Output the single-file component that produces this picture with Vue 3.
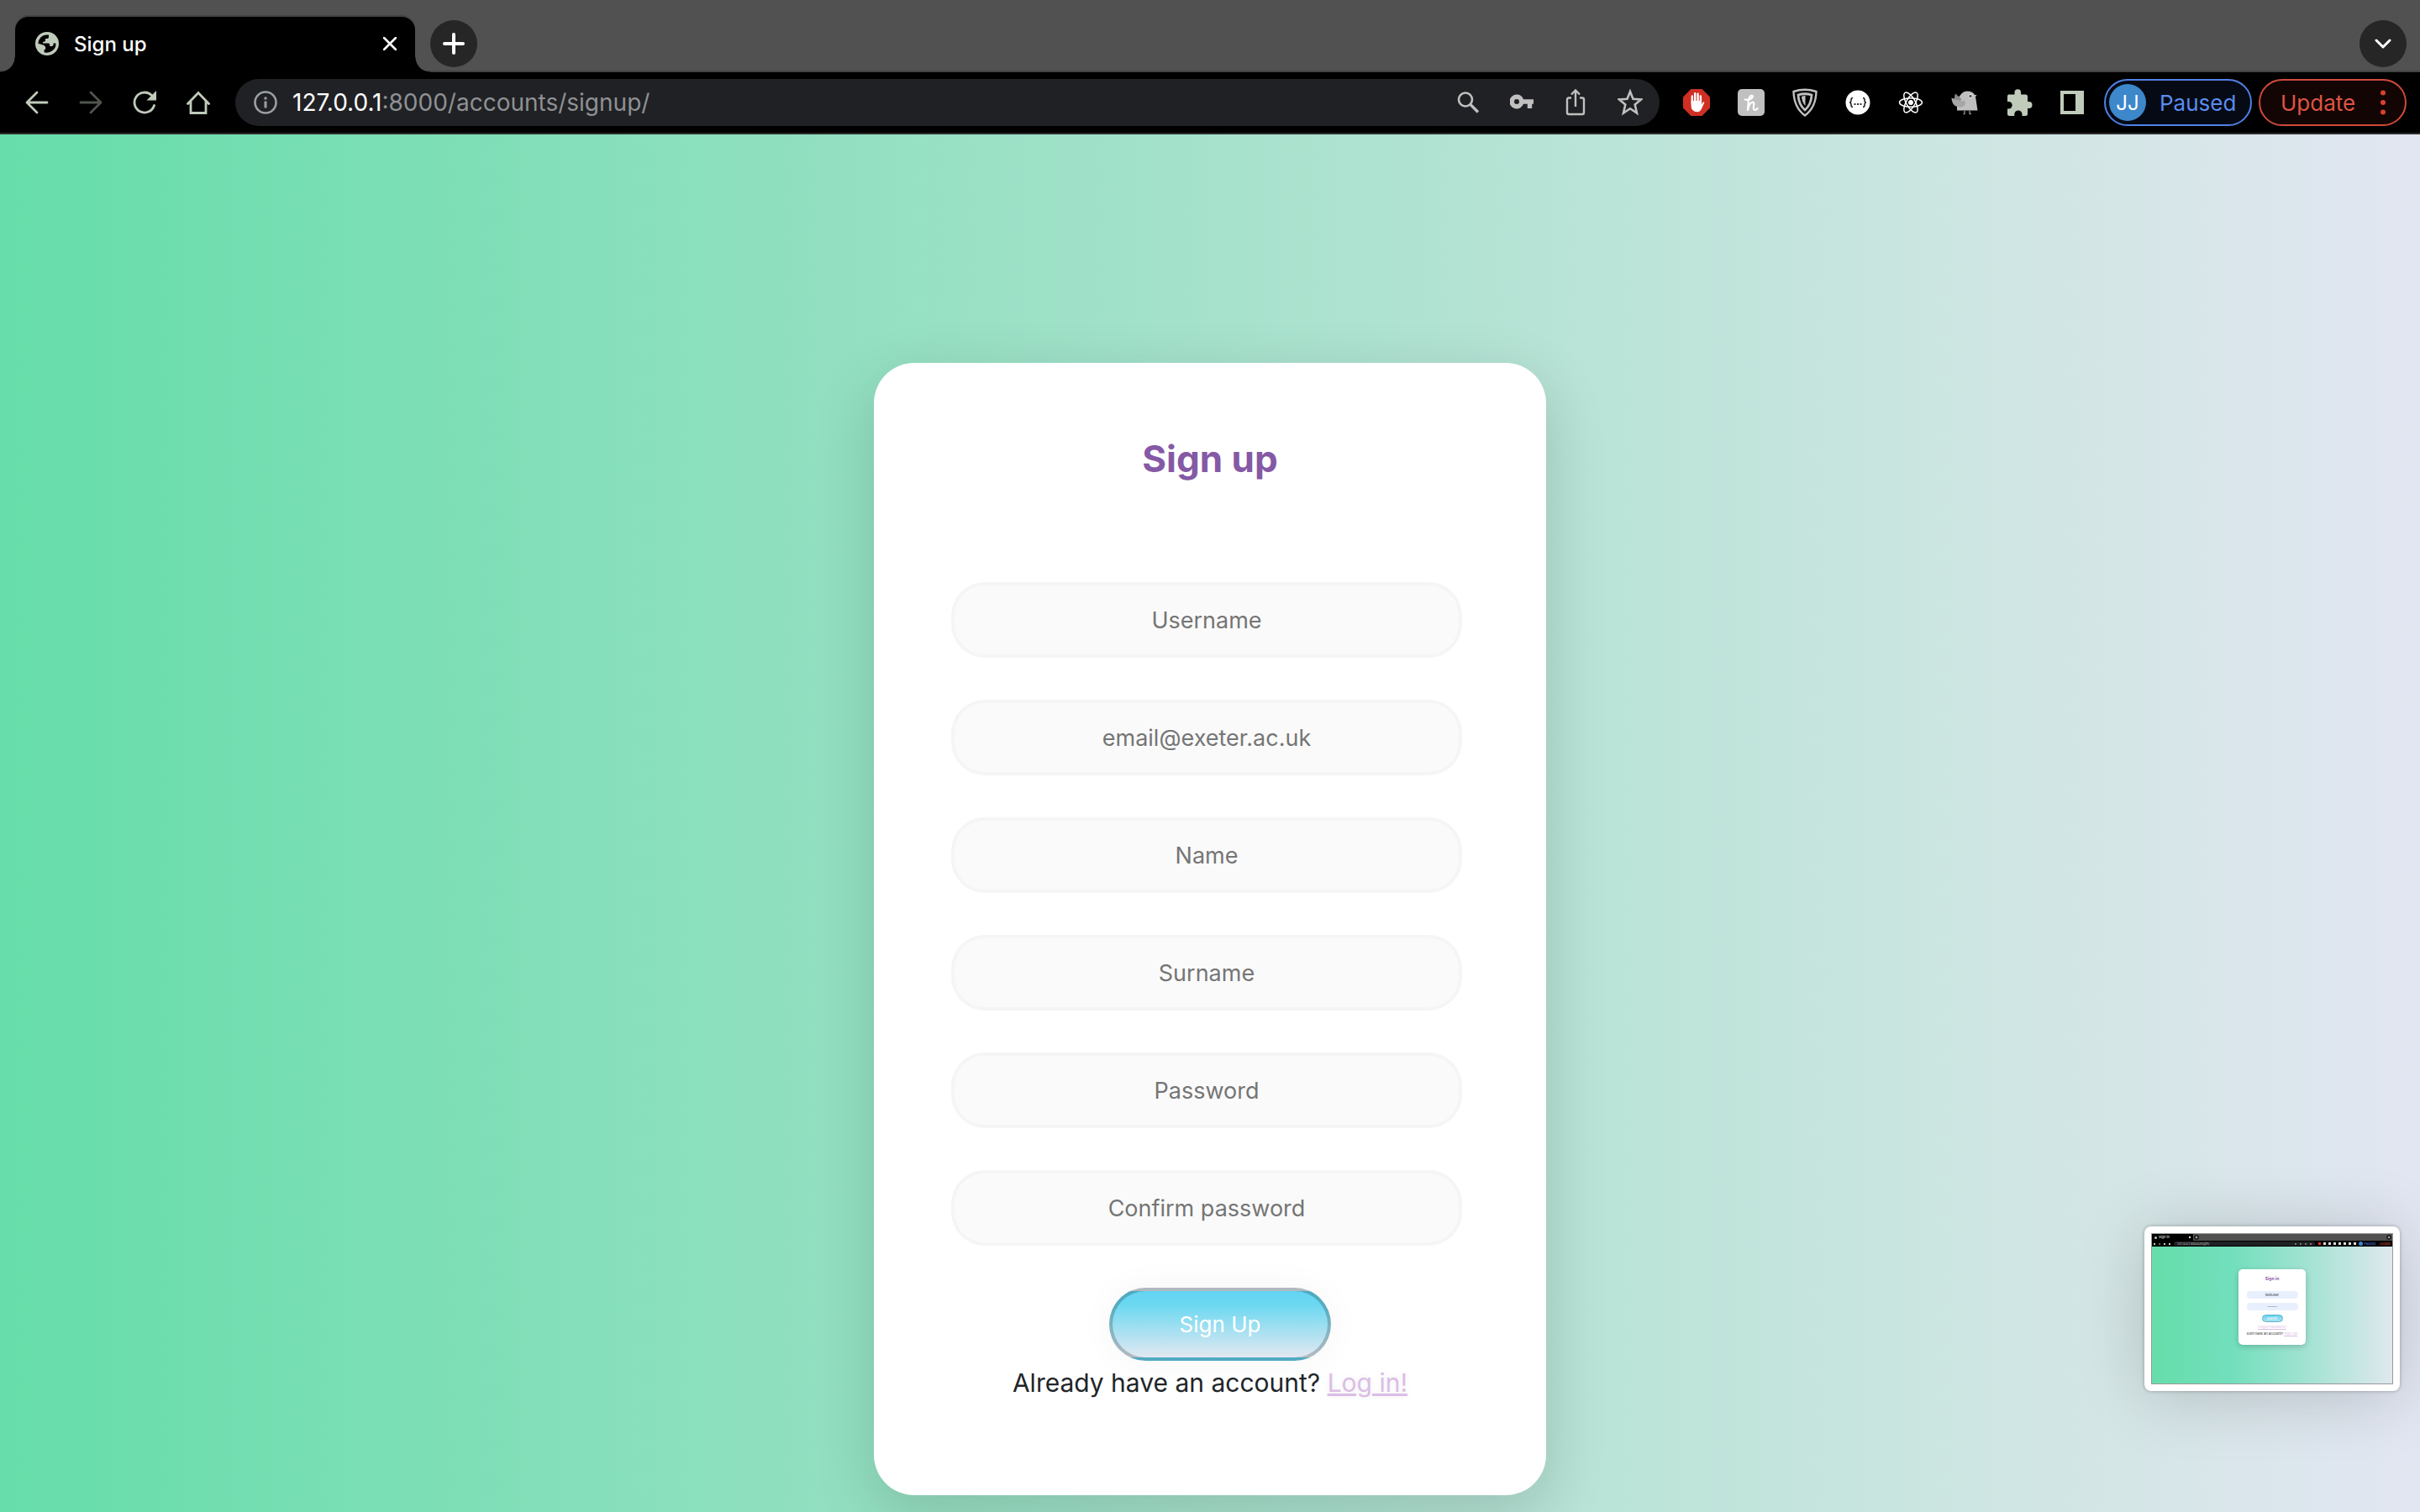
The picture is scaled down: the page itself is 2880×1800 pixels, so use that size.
<script setup>
import { ref } from 'vue'

const fields = [
  { id: 'username', type: 'text', label: 'Username' },
  { id: 'email', type: 'email', label: 'email@exeter.ac.uk' },
  { id: 'name', type: 'text', label: 'Name' },
  { id: 'surname', type: 'text', label: 'Surname' },
  { id: 'password', type: 'password', label: 'Password' },
  { id: 'confirm', type: 'password', label: 'Confirm password' },
]
const values = ref({})
</script>

<template>
  <div class="browser">
    <header>
      <div class="tabstrip">
        <div class="tab">
          <svg class="globe" viewBox="0 0 28 28"><circle cx="14" cy="14" r="14" fill="#c0cbbb" /><path d="M3.5 14C3.5 8 8 3.5 14 3.4l2 .2v2.600q0 1.500-1.700 1.700h-2.300v2.300q0 1-1 1.300l-2 .5v1.500h6.500q1.700.2 1.700 1.800v1.600h2.600q1.700 0 1.700-1.700l.2-2 2.800.6q.2 6.200-5.200 9.200-3.500 2.100-7.900 1.500l-.8-.2V21l1.500-.2v-3l-2.100-2-5-1.500z" fill="#000" /></svg>
          <span class="tab-title">Sign up</span>
          <button class="bare" aria-label="Close tab"><svg width="16" height="16" viewBox="0 0 16 16" class="line white"><path d="M1 1 15 15M15 1 1 15" stroke-width="2.600" /></svg></button>
        </div>
        <button class="round" aria-label="New tab"><svg width="26" height="26" viewBox="0 0 26 26" class="line white"><path d="M13 2V24M2 13H24" stroke-width="4" /></svg></button>
        <button class="round last" aria-label="Search tabs"><svg width="20" height="14" viewBox="0 0 20 14" class="line white"><path d="M2 3 10 11 18 3" stroke-width="3" /></svg></button>
      </div>
      <div class="toolbar">
        <nav class="nav">
          <button class="bare" aria-label="Back"><svg width="28" height="28" viewBox="0 0 28 28" class="line sage"><path d="M26 14H3M14 2 2 14 14 26" /></svg></button>
          <button class="bare dim" aria-label="Forward"><svg width="28" height="28" viewBox="0 0 28 28" class="line sage"><path d="M2 14H25M14 2 26 14 14 26" /></svg></button>
          <button class="bare" aria-label="Reload"><svg width="28" height="28" viewBox="0 0 28 28" class="line sage"><path d="M25.500 17.500A12 12 0 1 1 22.500 5.500" /><path d="M28 0V11.500H16.500z" fill="#c0cbbb" stroke="none" /></svg></button>
          <button class="bare" aria-label="Home"><svg width="28" height="28" viewBox="0 0 28 28" class="line sage"><path d="M1.500 15.500 14 2.500 26.500 15.500M5 13V26.500H23V13" stroke-linejoin="miter" /></svg></button>
        </nav>
        <div class="omnibox">
          <svg width="28" height="28" viewBox="0 0 28 28" fill="none" stroke="#9aa0a6" stroke-width="2.600"><circle cx="14" cy="14" r="12.500" /><path d="M14 12.500V20.500M14 7.500v3" stroke-width="3" /></svg>
          <span class="url"><b>127.0.0.1</b>:8000/accounts/signup/</span>
          <div class="omni-icons">
            <svg width="28" height="28" viewBox="0 0 28 28" fill="none" stroke="#c0c0c0" stroke-width="2.600"><circle cx="11" cy="10.500" r="8" /><path d="M17 16.500 26 25.500" stroke-width="3.200" /></svg>
            <svg width="28" height="28" viewBox="0 0 28 28" fill="#c0c0c0"><path fill-rule="evenodd" d="M8 4.500a8.500 8.500 0 0 1 8 5.700H28v5.600h-1.800v5.200h-5.400v-5.200H16A8.500 8.500 0 1 1 8 4.500m0 5.500a3 3 0 1 0 0 6 3 3 0 0 0 0-6" /></svg>
            <svg width="28" height="34" viewBox="0 0 28 34" fill="none" stroke="#c0c0c0" stroke-width="2.400"><path d="M9 11.500H6Q4 11.500 4 13.500V29Q4 31 6 31H22Q24 31 24 29V13.500Q24 11.500 22 11.500H19M14 22V3M9 7.500 14 2.500 19 7.500" /></svg>
            <svg width="30" height="34" viewBox="0 0 30 34" fill="none" stroke="#c0c0c0" stroke-width="2.600"><path d="M15 4 18.500 12.800 28 13.500 20.700 19.500 23 29.500 15 24.200 7 29.500 9.300 19.500 2 13.500 11.500 12.800z" /></svg>
          </div>
        </div>
        <div class="extensions">
          <svg width="32" height="32" viewBox="0 0 32 32"><path d="M9.400 0h13.200L32 9.400v13.200L22.600 32H9.400L0 22.600V9.400z" fill="#d02f23" /><g fill="none" stroke="#fff" stroke-width="2.400" stroke-linecap="round"><path d="M10.800 17V8.500M14.200 15V5.200M17.600 15V5.800M20.900 17V8.500" /></g><path d="M9.600 14H22.100V18.500L23.500 16Q24.800 14.600 25.400 16L22 23.500Q20.500 27.200 17 27.200 9.600 27.200 9.600 20z" fill="#fff" /></svg>
          <svg width="32" height="32" viewBox="0 0 32 32"><rect width="32" height="32" rx="5" fill="#c0c0c0" /><path d="M8.500 12.500Q13 13.500 16.500 11 19.500 8 16.500 7.800 13.500 8 12.800 15L12 25Q14 16 18 15.500 20 16 19 20 18.200 25 20.500 25 22.500 25 23.500 23" fill="none" stroke="#fff" stroke-width="2.200" stroke-linecap="round" stroke-linejoin="round" /></svg>
          <svg width="30" height="34" viewBox="0 0 30 34" fill="none" stroke="#c0c0c0"><path d="M1.500 4Q15-.5 28.500 4 28 23 15 32.500 2 23 1.500 4z" stroke-width="2.400" /><path d="M7 8Q15 5.500 23 8 22.500 19.500 15 26 7.500 19.500 7 8z" stroke-width="2.800" /><path d="M11 10Q13 9 15.500 9V21Q11.500 17 11 10z" fill="#c0c0c0" stroke="none" /></svg>
          <svg width="30" height="30" viewBox="0 0 30 30"><circle cx="15" cy="15" r="14.500" fill="#fff" /><g fill="none" stroke="#222" stroke-width="1.500"><path d="M9 9.500Q7 9.500 7 12 7 15 5 15 7 15 7 18 7 20.500 9 20.500M21 9.500Q23 9.500 23 12 23 15 25 15 23 15 23 18 23 20.500 21 20.500" /></g><path d="M10.500 16h2v2h-2zM14 16h2v2h-2zM17.500 16h2v2h-2z" fill="#333" /></svg>
          <svg width="30" height="30" viewBox="0 0 30 30" fill="none" stroke="#fff" stroke-width="1.500"><ellipse cx="15" cy="15" rx="13.500" ry="5.300" /><ellipse cx="15" cy="15" rx="13.500" ry="5.300" transform="rotate(60 15 15)" /><ellipse cx="15" cy="15" rx="13.500" ry="5.300" transform="rotate(120 15 15)" /><circle cx="15" cy="15" r="2.600" fill="#fff" stroke-width="1" /></svg>
          <svg width="32" height="32" viewBox="0 0 32 32"><path d="M8 13Q11 3 19 2.500 26 2.500 28 7L30.500 7 29 9 31.500 25.500H7V19z" fill="#c0c0c0" /><path d="M5 5.500 12.500 12 10 15 3 14z" fill="#8c8c8c" /><path d="M.5 10.500Q8 14 17 14.500 18 20 12 21.500 1 22 .5 10.500z" fill="#a6a6a6" /><circle cx="23" cy="8.500" r="2.200" fill="#555" stroke="#eee" stroke-width="1" /><path d="M16 26V29.500H14.500M22 26V29.500H24" fill="none" stroke="#888" stroke-width="1.400" /></svg>
          <svg width="32" height="32" viewBox="0 0 32 32" fill="#c0cbbb"><path d="M3 6.500H10.500V4a3.800 3.800 0 0 1 7.600 0V6.500H23.500Q26 6.500 26 9V15h1.500a4 4 0 0 1 0 8H26v6.500Q26 32 23.500 32H19.500V30a4.600 4.600 0 0 0-9.200 0v2H4.500Q2 32 2 29.500V23.500H3.500a4.200 4.200 0 0 0 0-8.400H2V8z" /></svg>
          <svg width="28" height="32" viewBox="0 0 28 32"><path fill-rule="evenodd" d="M0 2H28V30H0zM4 6V26H18V6z" fill="#c0cbbb" /></svg>
        </div>
        <button class="pill paused"><span class="avatar">JJ</span>Paused</button>
        <button class="pill update">Update<svg width="6" height="30" viewBox="0 0 6 30" fill="#d9412e"><circle cx="3" cy="3.500" r="3" /><circle cx="3" cy="15" r="3" /><circle cx="3" cy="26.500" r="3" /></svg></button>
      </div>
    </header>

    <main>
      <section class="card">
        <h1>Sign up</h1>
        <form @submit.prevent>
          <input v-for="f in fields" :key="f.id" v-model="values[f.id]" :type="f.type" :placeholder="f.label" :aria-label="f.label">
          <button class="submit" type="submit">Sign Up</button>
        </form>
        <p>Already have an account? <a href="#login">Log in!</a></p>
      </section>
    </main>

    <aside class="thumb">
      <div class="mini">
        <div class="mini-tabs"><div class="mini-tab"><i class="dot"></i><span>Sign in</span><i class="close"></i></div><i class="plus"></i><i class="plus end"></i></div>
        <div class="mini-bar">
          <i class="m"></i><i class="m faint"></i><i class="m"></i><i class="m"></i>
          <div class="mini-url"><span>127.0.0.1:8000/login/</span><i class="m faint"></i><i class="m faint"></i><i class="m faint"></i><i class="m faint"></i></div>
          <i class="e red"></i><i class="e"></i><i class="e"></i><i class="e"></i><i class="e"></i><i class="e"></i><i class="e"></i><i class="e"></i>
          <i class="mini-avatar"></i><span class="mini-paused">Paused</span><span class="mini-update">Update</span>
        </div>
        <div class="mini-page">
          <div class="mini-card">
            <strong>Sign in</strong>
            <div class="mini-field">testUser</div>
            <div class="mini-field dots">••••••••••</div>
            <div class="mini-button">submit</div>
            <span class="mini-link">Forgot Password?</span>
            <span class="mini-text">Dont have an account? <span class="mini-link">Sign Up!</span></span>
          </div>
        </div>
      </div>
    </aside>
  </div>
</template>

<style>
body { margin: 0; }
</style>

<style scoped>
* { box-sizing: border-box; }
.browser {
  position: relative;
  display: flex;
  flex-direction: column;
  height: 100vh;
  overflow: hidden;
  font-family: Inter, "Liberation Sans", sans-serif;
}
header { flex: none; border-bottom: 2px solid #2c2c2b; background: #000; }
button { font-family: inherit; cursor: pointer; }
svg { display: block; flex: none; }
.line { fill: none; stroke-width: 2.8px; stroke-linecap: round; stroke-linejoin: round; }
.white { stroke: #fff; }
.sage { stroke: #c0cbbb; }
.bare { padding: 0; border: 0; background: none; }
.dim { opacity: .42; }

.tabstrip {
  display: flex;
  align-items: flex-end;
  height: 86px;
  padding: 0 18px;
  background: #515151;
  border-bottom: 2px solid #434343;
}
.tab {
  position: relative;
  display: flex;
  align-items: center;
  width: 476px;
  height: 66px;
  margin-bottom: -2px;
  padding: 0 22px 2px 24px;
  border-radius: 16px 16px 0 0;
  background: #000;
  box-shadow: 0 -2px 0 #434343;
}
.tab::before, .tab::after {
  content: "";
  position: absolute;
  bottom: 0;
  width: 18px;
  height: 18px;
}
.tab::before { left: -18px; background: radial-gradient(circle at 0 0, transparent 17px, #000 18px); }
.tab::after { right: -18px; background: radial-gradient(circle at 100% 0, transparent 17px, #000 18px); }
.globe { width: 28px; height: 28px; }
.tab-title { flex: 1; margin-left: 18px; font-size: 24px; font-weight: 500; color: #fff; }
.round {
  display: grid;
  place-items: center;
  width: 56px;
  height: 56px;
  margin: 0 0 4px 18px;
  padding: 0;
  border: 0;
  border-radius: 50%;
  background: #262626;
}
.round.last { margin-left: auto; margin-right: -2px; }

.toolbar { display: flex; align-items: center; height: 72px; padding: 0 16px 0 30px; }
.nav { display: flex; gap: 36px; }
.omnibox {
  flex: 1;
  display: flex;
  align-items: center;
  height: 56px;
  margin: 0 28px 0 30px;
  padding: 0 20px 0 22px;
  border-radius: 28px;
  background: #202124;
}
.url { flex: 1; margin-left: 18px; font-size: 28px; color: #8f9194; }
.url b { font-weight: 400; color: #fff; }
.omni-icons { display: flex; align-items: center; gap: 36px; }
.extensions { display: flex; align-items: center; gap: 33px; }
.pill { display: flex; align-items: center; height: 56px; border: 2px solid; border-radius: 28px; font-size: 26px; }
.paused { width: 176px; margin-left: 24px; padding: 0 0 0 4px; gap: 16px; border-color: #4f81e8; background: #050a14; color: #5a8cf0; }
.avatar { display: grid; place-items: center; width: 44px; height: 44px; border-radius: 50%; background: #3d87cb; color: #fff; font-size: 24px; }
.update { justify-content: space-between; width: 176px; margin-left: 8px; padding: 0 23px 0 24px; border-color: #d04a3a; background: #120503; color: #df5443; }

main {
  flex: 1;
  display: flex;
  justify-content: center;
  align-items: flex-start;
  padding-top: 272px;
  background: linear-gradient(to right, #66ddaa, #94e0c2 36%, #d4e6e6 87%, #e2e6f2);
}
.card {
  display: flex;
  flex-direction: column;
  align-items: center;
  width: 800px;
  height: 1348px;
  border-radius: 48px;
  background: #fff;
  box-shadow: 0 22px 70px 4px rgba(0, 0, 0, .14);
}
h1 { margin: 84px 0 0; font-size: 44px; line-height: 60px; font-weight: 700; color: #8559a5; }
form { display: flex; flex-direction: column; width: 608px; margin: 117px 8px 0 0; gap: 50px; }
input {
  width: 100%;
  height: 90px;
  padding: 0 40px;
  border: 4px solid rgba(0, 0, 0, .02);
  border-radius: 40px;
  outline: none;
  background: rgba(136, 126, 126, .04);
  font: 400 27px Inter, "Liberation Sans", sans-serif;
  text-align: center;
}
input::placeholder { color: #757575; opacity: 1; }
.submit {
  align-self: center;
  width: 264px;
  height: 87px;
  margin-left: 32px;
  border: 4px solid rgba(0, 0, 0, .2);
  border-radius: 44px;
  background-image: linear-gradient(#63d4f3, #6bd8f1 20%, #e2e8f1);
  box-shadow: 0 0 40px 2px rgba(0, 0, 0, .04);
  color: #fff;
  font-size: 26px;
}
p { margin: 2px 0 0; font-size: 30px; line-height: 48px; color: #212529; }
a { color: #dcbde6; text-shadow: 0 0 6px rgba(117, 117, 117, .12); }

.thumb {
  position: absolute;
  right: 24px;
  bottom: 144px;
  width: 304px;
  padding: 8px;
  border-radius: 8px;
  background: #fff;
  box-shadow: 0 0 4px rgba(0, 0, 0, .3), 0 6px 80px rgba(0, 0, 0, .18);
}
.mini { height: 180px; border: 1px solid #999; font-size: 4px; line-height: 6px; }
.mini i { flex: none; }
.mini-tabs { display: flex; align-items: center; height: 8px; background: #515151; }
.mini-tab { display: flex; align-items: center; gap: 2px; width: 49px; height: 8px; padding: 0 3px; background: #000; color: #fff; }
.mini-tab .close { margin-left: auto; width: 2px; height: 2px; background: #ddd; }
.dot { width: 3px; height: 3px; border-radius: 50%; background: #c0cbbb; }
.plus { width: 6px; height: 6px; margin-left: 1px; border: 2px solid #222; border-radius: 50%; background: #ddd; }
.plus.end { margin-left: auto; margin-right: 1px; }
.mini-bar { display: flex; align-items: center; gap: 4px; height: 7px; padding: 0 2px; background: #000; }
.m { width: 2px; height: 2px; background: #c0cbbb; }
.faint { opacity: .5; }
.mini-url { flex: 1; display: flex; align-items: center; gap: 4px; height: 5px; padding: 0 4px; border-radius: 3px; background: #202124; color: #bbb; }
.mini-url span { flex: 1; }
.e { width: 3px; height: 3px; margin-right: -1px; background: #ddd; }
.e.red { background: #e02f23; }
.mini-avatar { width: 5px; height: 5px; border-radius: 50%; background: #3d87cb; }
.mini-paused { margin-left: -3px; color: #4f81e8; }
.mini-update { color: #d04a3a; }
.mini-page { display: flex; justify-content: center; align-items: flex-start; height: 163px; padding-top: 27px; background: linear-gradient(to right, #66ddaa, #72dfbc 33%, #9be2cf 60%, #dfe8ee); }
.mini-card { display: flex; flex-direction: column; align-items: center; width: 80px; height: 90px; padding-top: 8px; border-radius: 5px; background: #fff; box-shadow: 0 2px 7px rgba(0, 0, 0, .2); color: #222; white-space: nowrap; }
.mini-card strong { margin-bottom: 12px; font-size: 5px; line-height: 6px; color: #8c55aa; }
.mini-field { width: 61px; height: 9px; margin-bottom: 5px; border-radius: 4px; background: #e8f0fe; line-height: 9px; text-align: center; }
.dots { font-size: 2px; }
.mini-button { width: 25px; height: 9px; margin-bottom: 3px; border: 1px solid #5ab5cc; border-radius: 5px; background: linear-gradient(#63d4f3, #b0e0ee); color: #fff; line-height: 7px; text-align: center; }
.mini-link { color: #dcbde6; text-decoration: underline; }
.mini-text { margin-top: 2px; }
</style>
